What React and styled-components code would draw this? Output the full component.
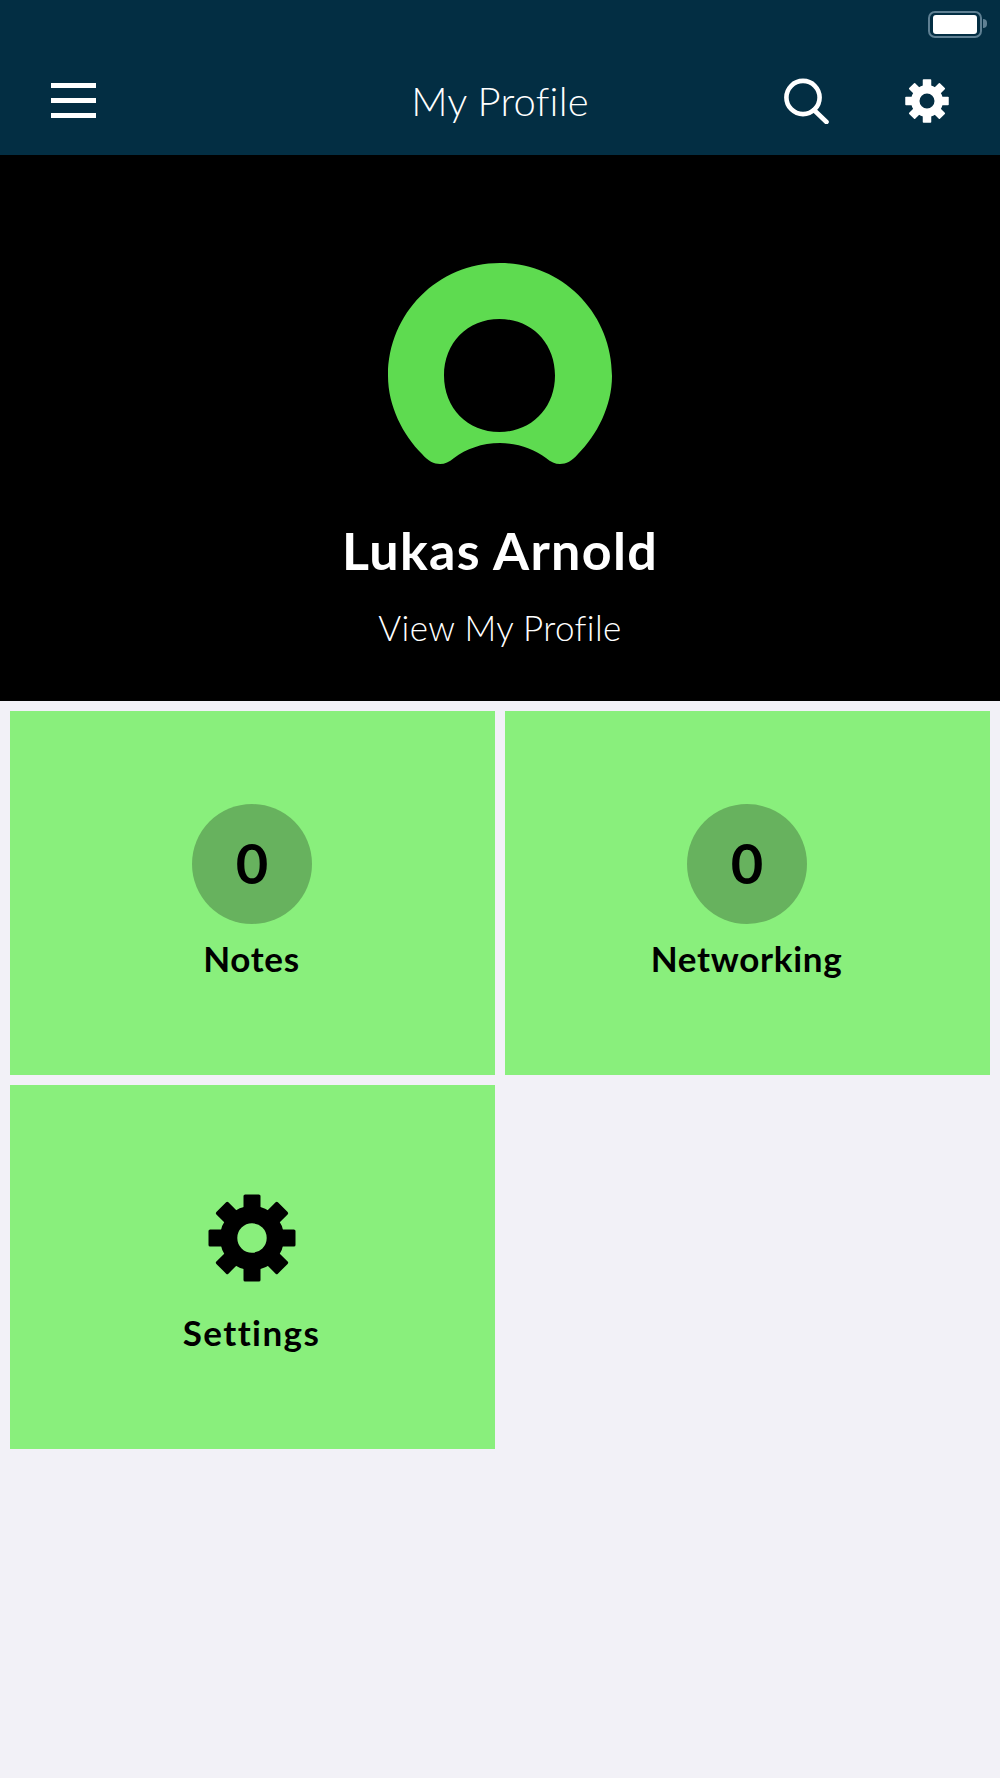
import React from "react";
import styled, { createGlobalStyle } from "styled-components";

const Global = createGlobalStyle`
  html, body { margin: 0; padding: 0; background: #f2f1f7; }
  body { font-family: "Lato", "Open Sans", sans-serif; }
  * { box-sizing: border-box; }
`;

const Page = styled.div`
  width: 1000px;
  min-height: 1778px;
  background: #f2f1f7;
`;

const Header = styled.header`
  height: 155px;
  background: #032e43;
  display: flex;
  flex-direction: column;
`;

const StatusBar = styled.div`
  height: 56px;
  padding: 11px 18px 0 0;
  display: flex;
  justify-content: flex-end;
  align-items: flex-start;
`;

const Battery = styled.div`
  width: 54px;
  height: 27px;
  border: 2px solid #5f8093;
  border-radius: 7px;
  padding: 2px 3px;
  position: relative;
  &::after {
    content: "";
    position: absolute;
    right: -7px;
    top: 6px;
    width: 4px;
    height: 9px;
    background: #5f8093;
    border-radius: 0 5px 5px 0;
  }
`;

const BatteryFill = styled.div`
  height: 100%;
  background: #fff;
  border-radius: 3px;
`;

const NavBar = styled.nav`
  flex: 1;
  display: grid;
  grid-template-columns: 1fr auto 1fr;
  align-items: center;
  padding: 0 51px 9px;
`;

const MenuButton = styled.div`
  width: 45px;
  display: flex;
  flex-direction: column;
  gap: 10.5px;
  margin-top: -1px;
`;

const MenuBar = styled.span`
  display: block;
  height: 4.5px;
  background: #fff;
`;

const Title = styled.h1`
  margin: 0;
  font-size: 40px;
  line-height: 48px;
  font-weight: 300;
  color: #fff;
  letter-spacing: 0.2px;
`;

const NavActions = styled.div`
  display: flex;
  justify-content: flex-end;
  align-items: center;
  gap: 76px;
`;

const Profile = styled.section`
  height: 546px;
  background: #000;
  padding-top: 108px;
  display: flex;
  flex-direction: column;
  align-items: center;
`;

const Logo = styled.svg`
  display: block;
  width: 224px;
  height: 202px;
`;

const Name = styled.h2`
  margin: 54px 0 0;
  font-size: 52px;
  line-height: 62px;
  font-weight: 700;
  color: #fff;
  letter-spacing: 1.3px;
`;

const ViewLink = styled.a`
  margin-top: 25px;
  font-size: 35px;
  line-height: 42px;
  font-weight: 300;
  color: #fff;
  letter-spacing: 0.35px;
`;

const Tiles = styled.div`
  display: grid;
  grid-template-columns: 485px 485px;
  grid-auto-rows: 364px;
  gap: 10px;
  padding: 10px;
`;

const Tile = styled.div`
  background: #89ef7c;
  padding-top: 93px;
  display: flex;
  flex-direction: column;
  align-items: center;
`;

const Count = styled.div`
  width: 120px;
  height: 120px;
  margin-right: 1px;
  padding-bottom: 3px;
  border-radius: 50%;
  background: #67b25e;
  color: #000;
  font-size: 56px;
  font-weight: 700;
  display: flex;
  align-items: center;
  justify-content: center;
`;

const IconSlot = styled.div`
  width: 120px;
  height: 120px;
  margin-right: 1px;
  display: flex;
  align-items: center;
  justify-content: center;
`;

const TileLabel = styled.div`
  margin-top: 13px;
  margin-right: 2px;
  font-size: 35px;
  line-height: 42px;
  font-weight: 700;
  color: #000;
  letter-spacing: ${(p) => p.$spacing}px;
`;

function Gear({ size, color, hole }) {
  const ringOuter = 32;
  const r = (hole + ringOuter) / 2;
  const w = ringOuter - hole;
  return (
    <svg width={size} height={size} viewBox="-44 -44 88 88" style={{ display: "block" }}>
      <circle r={r} fill="none" stroke={color} strokeWidth={w} />
      {[0, 45, 90, 135, 180, 225, 270, 315].map((a) => (
        <rect key={a} x="-8.5" y="-43.5" width="17" height="19" rx="1.6" fill={color} transform={`rotate(${a})`} />
      ))}
    </svg>
  );
}

function Search() {
  return (
    <svg width="46" height="46" viewBox="0 0 46 46" style={{ display: "block" }} fill="none" stroke="#fff" strokeWidth="4.6" strokeLinecap="round">
      <circle cx="20" cy="19.5" r="16.6" />
      <line x1="31" y1="32" x2="43.5" y2="44" />
    </svg>
  );
}

export default function App() {
  return (
    <Page>
      <Global />
      <Header>
        <StatusBar>
          <Battery>
            <BatteryFill />
          </Battery>
        </StatusBar>
        <NavBar>
          <MenuButton>
            <MenuBar />
            <MenuBar />
            <MenuBar />
          </MenuButton>
          <Title>My Profile</Title>
          <NavActions>
            <Search />
            <Gear size={44} color="#fff" hole={15} />
          </NavActions>
        </NavBar>
      </Header>
      <Profile>
        <Logo viewBox="0 0 224 202">
          <path
            fill="#5edb50"
            fillRule="evenodd"
            d="M112 0C174 0 224 50 224 113C224 143 209 172 190 191C184 198 178 201 172 201C167 201 163 199 158 195C146 186 130 180 112 180C94 180 78 186 66 195C61 199 57 201 52 201C46 201 40 198 34 191C15 172 0 143 0 113C0 50 50 0 112 0ZM111.5 56C79.5 56 56 80 56 112.5C56 145 79.5 169 111.5 169C143.5 169 167 145 167 112.5C167 80 143.5 56 111.5 56Z"
          />
        </Logo>
        <Name>Lukas Arnold</Name>
        <ViewLink>View My Profile</ViewLink>
      </Profile>
      <Tiles>
        <Tile>
          <Count>0</Count>
          <TileLabel $spacing={0.7}>Notes</TileLabel>
        </Tile>
        <Tile>
          <Count>0</Count>
          <TileLabel $spacing={0.7}>Networking</TileLabel>
        </Tile>
        <Tile>
          <IconSlot>
            <Gear size={88} color="#000" hole={14.7} />
          </IconSlot>
          <TileLabel $spacing={1.4}>Settings</TileLabel>
        </Tile>
      </Tiles>
    </Page>
  );
}
